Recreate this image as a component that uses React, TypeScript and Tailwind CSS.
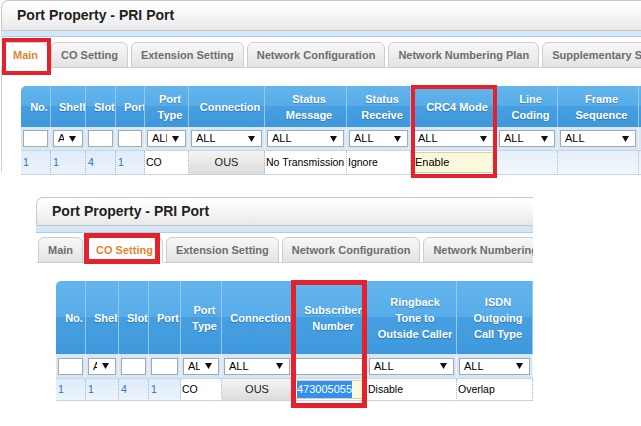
import React from 'react';

type CellKind = 'index' | 'plain' | 'button' | 'field' | 'picked' | 'tint';

type Column = {
  label: React.ReactNode;
  filter: 'input' | 'select';
  kind: CellKind;
  value?: string;
};

const headBg =
  'bg-[linear-gradient(to_bottom,#63b4ec_0%,#57ace8_50%,#469fe0_50%,#3e99dc_100%)]';

// columns shared by every port tab
const baseCols: Column[] = [
  { label: 'No.', filter: 'input', kind: 'index', value: '1' },
  { label: 'Shelf', filter: 'select', kind: 'index', value: '1' },
  { label: 'Slot', filter: 'input', kind: 'index', value: '4' },
  { label: 'Port', filter: 'input', kind: 'index', value: '1' },
  { label: <>Port<br />Type</>, filter: 'select', kind: 'plain', value: 'CO' },
  { label: 'Connection', filter: 'select', kind: 'button', value: 'OUS' },
];

const mainCols: Column[] = [
  ...baseCols,
  { label: <>Status<br />Message</>, filter: 'select', kind: 'plain', value: 'No Transmission' },
  { label: <>Status<br />Receive</>, filter: 'select', kind: 'plain', value: 'Ignore' },
  { label: 'CRC4 Mode', filter: 'select', kind: 'field', value: 'Enable' },
  { label: <>Line<br />Coding</>, filter: 'select', kind: 'tint' },
  { label: <>Frame<br />Sequence</>, filter: 'select', kind: 'tint' },
  { label: '', filter: 'select', kind: 'tint' },
];

const coCols: Column[] = [
  ...baseCols,
  { label: <>Subscriber<br />Number</>, filter: 'input', kind: 'picked', value: '473005055' },
  { label: <>Ringback<br />Tone to<br />Outside Caller</>, filter: 'select', kind: 'plain', value: 'Disable' },
  { label: <>ISDN<br />Outgoing<br />Call Type</>, filter: 'select', kind: 'plain', value: 'Overlap' },
];

const tabs = [
  'Main',
  'CO Setting',
  'Extension Setting',
  'Network Configuration',
  'Network Numbering Plan',
  'Supplementary Service',
];

function Arrow() {
  return (
    <svg width="7" height="6" viewBox="0 0 7 6" className="shrink-0">
      <path d="M0 0h7L3.5 6z" fill="#111" />
    </svg>
  );
}

function FilterBox({ kind }: { kind: 'input' | 'select' }) {
  return (
    <div className="flex h-[17px] w-full items-center border border-[#a4a9ae] bg-white text-[11px] text-black">
      {kind === 'select' && (
        <>
          <span className="min-w-0 flex-1 overflow-hidden whitespace-nowrap pl-[4px] leading-none">ALL</span>
          <span className="ml-[5px] mr-[6px] flex">
            <Arrow />
          </span>
        </>
      )}
    </div>
  );
}

function HeadCell({ first, children }: { first: boolean; children: React.ReactNode }) {
  return (
    <div
      className={`flex flex-col justify-center overflow-hidden whitespace-nowrap border-r border-[#95c8ef] pl-[8px] pr-[1px] text-center text-[11px] font-bold leading-[16px] text-white [text-shadow:0_1px_1px_rgba(0,50,110,0.35)] ${headBg} ${first ? 'rounded-tl-[5px]' : ''}`}
    >
      <div>{children}</div>
    </div>
  );
}

function DataCell({ kind, value }: { kind: CellKind; value?: string }) {
  const base = 'flex items-center overflow-hidden whitespace-nowrap border-b border-[#c8d5e1] text-[10.5px]';
  if (kind === 'index')
    return (
      <div className={`${base} border-r border-r-[#a9b3bd] [border-right-style:dotted] bg-linear-to-b from-[#dfecf9] to-[#ebf3fc] pl-[2px] text-[#2f70bd]`}>
        {value}
      </div>
    );
  if (kind === 'plain')
    return (
      <div className={`${base} border-r border-r-[#b4b4b4] [border-right-style:dotted] bg-white pl-[1px] text-black`}>
        {value}
      </div>
    );
  if (kind === 'button')
    return (
      <div className={`${base} justify-center border-r border-r-[#b4b4b4] [border-right-style:dotted] bg-linear-to-b from-[#f5f5f5] to-[#dcdcdc] text-[11px] text-[#222]`}>
        {value}
      </div>
    );
  if (kind === 'tint')
    return <div className={`${base} border-r border-r-[#b4bcc4] [border-right-style:dotted] bg-linear-to-b from-[#e6f0fa] to-[#f1f7fd]`} />;
  return (
    <div className={`${base} bg-white px-[2px] py-[1px]`}>
      <div className="flex h-full w-full items-center border border-[#d3d0b4] bg-[#fbf8dc] pl-[1px] text-[11px] text-black">
        {kind === 'picked' ? <span className="bg-[#3390ec] text-white">{value}</span> : value}
      </div>
    </div>
  );
}

function PortGrid({ cols, layout }: { cols: Column[]; layout: string }) {
  return (
    <div className={`grid ${layout}`}>
      {cols.map((c, i) => (
        <HeadCell key={`h${i}`} first={i === 0}>
          {c.label}
        </HeadCell>
      ))}
      {cols.map((c, i) => (
        <div key={`f${i}`} className="flex items-center border-r border-b border-r-[#ebf3fa] border-b-[#c3d7ea] bg-[#d8e7f5] px-[2px]">
          <FilterBox kind={c.filter} />
        </div>
      ))}
      {cols.map((c, i) => (
        <DataCell key={`d${i}`} kind={c.kind} value={c.value} />
      ))}
    </div>
  );
}

function TitleBar({ tall }: { tall: boolean }) {
  return (
    <>
      <div
        className={`flex items-center rounded-tl-[7px] border border-r-0 border-[#c8c8c8] bg-linear-to-b from-white via-[#f6f6f6] to-[#e8e8e8] pl-[15px] text-[14px] font-bold text-[#1f1f1f] ${tall ? 'h-[31px]' : 'h-[29px]'}`}
      >
        Port Property - PRI Port
      </div>
      <div className={`border-b border-[#b3cbe3] bg-[#d4e7f9] ${tall ? 'h-[6px]' : 'h-[7px]'}`} />
    </>
  );
}

function TabStrip({ active, className }: { active: string; className: string }) {
  return (
    <div className={`flex gap-[3px] border-b border-[#d4d4d4] ${className}`}>
      {tabs.map((t) => (
        <div
          key={t}
          className={`-mb-px flex h-[26px] shrink-0 items-center whitespace-nowrap rounded-t-[6px] border border-[#cdcdcd] px-[9px] text-[11px] font-bold ${
            t === active
              ? 'border-b-white bg-white text-[#e3832f]'
              : 'bg-linear-to-b from-[#f8f8f8] to-[#e3e3e3] text-[#6e6e6e]'
          }`}
        >
          {t}
        </div>
      ))}
    </div>
  );
}

export default function App() {
  return (
    <div className="relative h-[426px] w-[641px] overflow-hidden bg-white font-['Liberation_Sans',Arial,sans-serif]">
      {/* Main tab */}
      <section className="h-[178px] pl-[1px]">
        <TitleBar tall />
        <TabStrip active="Main" className="pl-[2px] pt-[5px]" />
        <div className="h-[104px] border-l border-[#bcd3e9] pl-[19px] pt-[18px]">
          <PortGrid
            cols={mainCols}
            layout="w-max grid-cols-[30px_35px_30px_29px_44px_76px_82px_64px_86px_61px_81px_40px] grid-rows-[41px_24px_24px]"
          />
        </div>
      </section>

      {/* CO Setting tab */}
      <section className="ml-[36px] mt-[19px] w-[497px] overflow-hidden">
        <TitleBar tall={false} />
        <TabStrip active="CO Setting" className="pl-[2px] pt-[4px]" />
        <div className="pl-[20px] pt-[18px]">
          <PortGrid
            cols={coCols}
            layout="w-max grid-cols-[30px_33px_30px_32px_41px_71px_74px_90px_76px] grid-rows-[73px_25px_22px]"
          />
        </div>
      </section>

      {/* highlight frames */}
      <div className="pointer-events-none absolute left-[2px] top-[38px] h-[37px] w-[49px] border-[4px] border-[#e3222b]" />
      <div className="pointer-events-none absolute left-[411px] top-[85px] h-[93px] w-[86px] border-[4px] border-[#e3222b]" />
      <div className="pointer-events-none absolute left-[84px] top-[233px] h-[31px] w-[76px] border-[5px] border-[#e3222b]" />
      <div className="pointer-events-none absolute left-[291px] top-[280px] h-[128px] w-[76px] border-[5px] border-[#e3222b]" />
    </div>
  );
}
